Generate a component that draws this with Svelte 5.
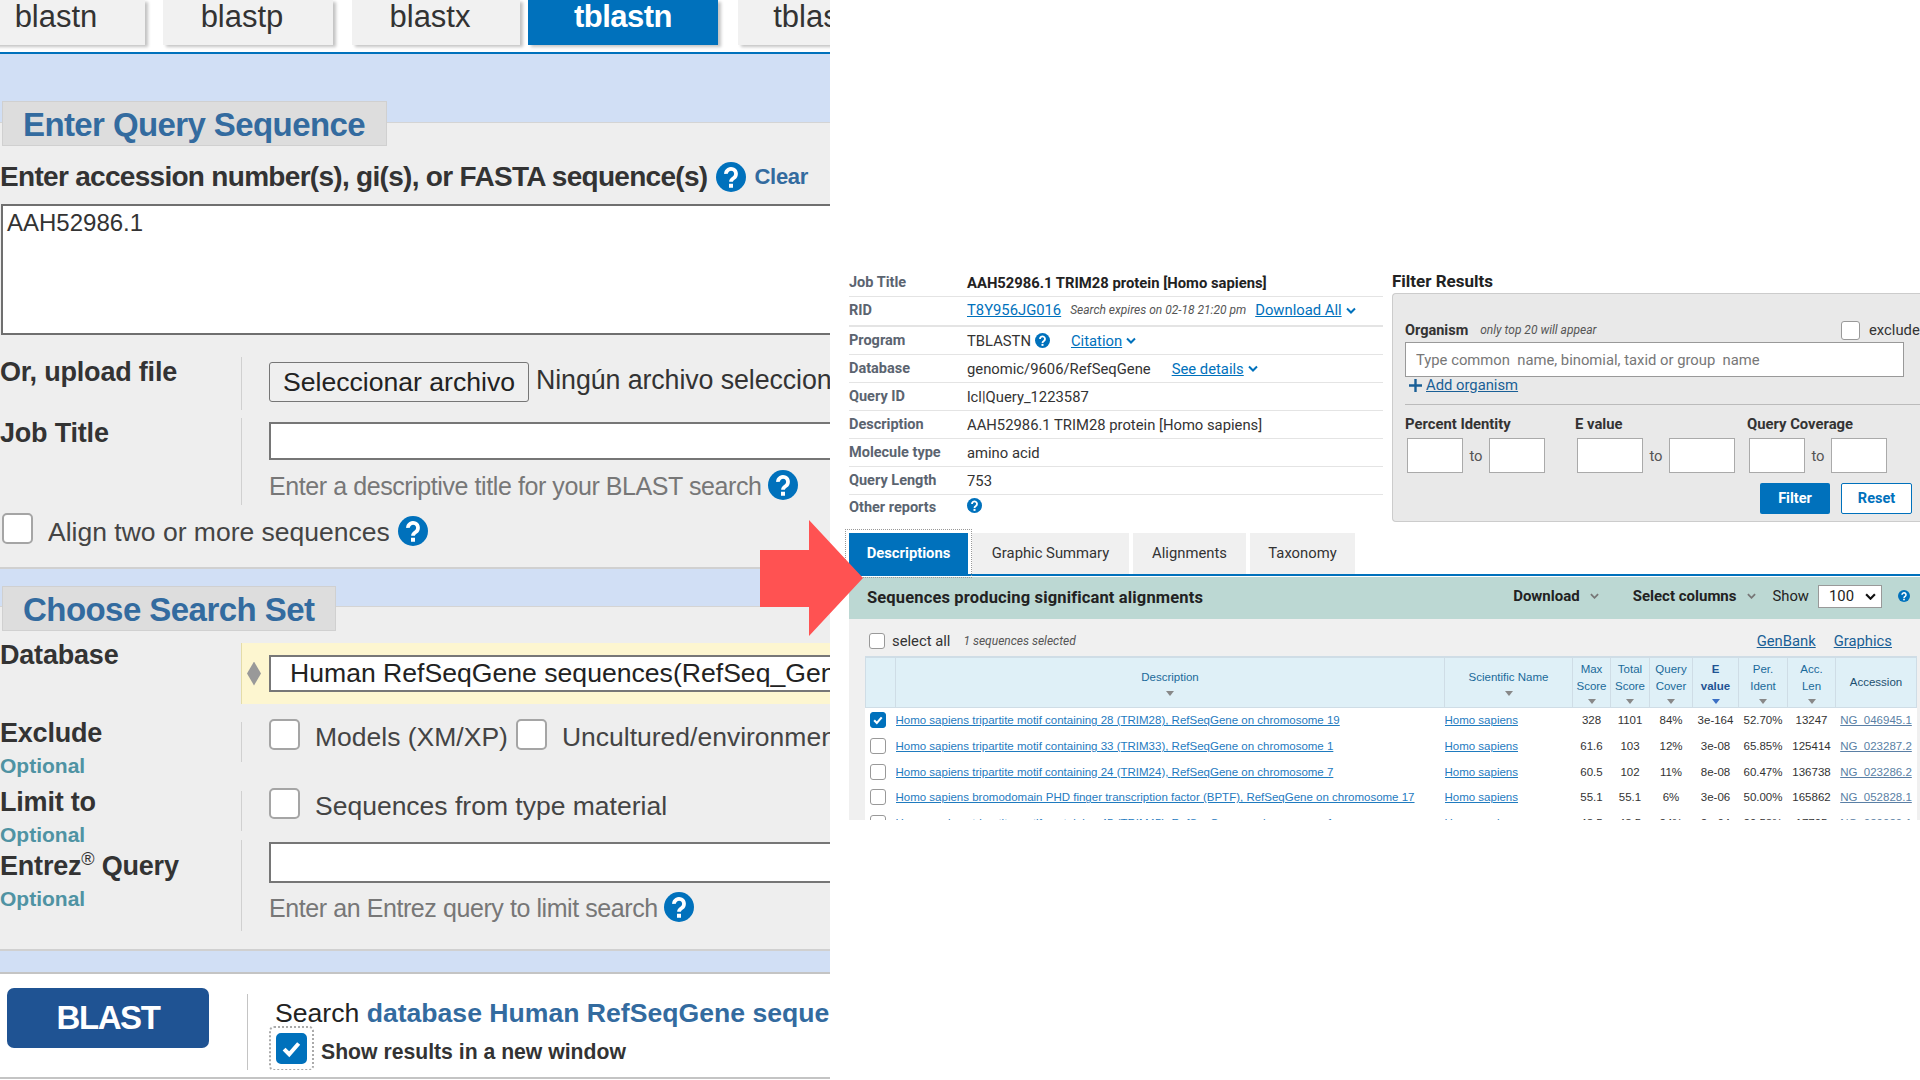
<script>
	const tabs = [
		{ name: 'blastn' },
		{ name: 'blastp' },
		{ name: 'blastx' },
		{ name: 'tblastn', active: true },
		{ name: 'tblastx' }
	];
	const summary = [
		{ label: 'Query ID', value: 'lcl|Query_1223587' },
		{ label: 'Description', value: 'AAH52986.1 TRIM28 protein [Homo sapiens]' },
		{ label: 'Molecule type', value: 'amino acid' },
		{ label: 'Query Length', value: '753' }
	];
	const ranges = [
		{ label: 'Percent Identity', cls: 'narrow' },
		{ label: 'E value', cls: 'wide' },
		{ label: 'Query Coverage', cls: 'narrow' }
	];
	const resultTabs = ['Graphic Summary', 'Alignments', 'Taxonomy'];
	const rows = [
		{ on: true, d: 'Homo sapiens tripartite motif containing 28 (TRIM28), RefSeqGene on chromosome 19', v: ['328', '1101', '84%', '3e-164', '52.70%', '13247'], a: 'NG_046945.1' },
		{ d: 'Homo sapiens tripartite motif containing 33 (TRIM33), RefSeqGene on chromosome 1', v: ['61.6', '103', '12%', '3e-08', '65.85%', '125414'], a: 'NG_023287.2' },
		{ d: 'Homo sapiens tripartite motif containing 24 (TRIM24), RefSeqGene on chromosome 7', v: ['60.5', '102', '11%', '8e-08', '60.47%', '136738'], a: 'NG_023286.2' },
		{ d: 'Homo sapiens bromodomain PHD finger transcription factor (BPTF), RefSeqGene on chromosome 17', v: ['55.1', '55.1', '6%', '3e-06', '50.00%', '165862'], a: 'NG_052828.1' },
		{ d: 'Homo sapiens tripartite motif containing 45 (TRIM45), RefSeqGene on chromosome 1', v: ['48.5', '48.5', '24%', '2e-04', '29.53%', '17795'], a: 'NG_029029.1' }
	];
</script>

{#snippet help(cls)}
	<svg class={cls} viewBox="0 0 24 24">
		<circle cx="12" cy="12" r="12" fill="#0071bc" />
		<path d="M8 9.5a4 4 0 1 1 6.2 3.3c-1.4.9-2.2 1.5-2.2 3" fill="none" stroke="#fff" stroke-width="3" />
		<rect x="10.4" y="17.4" width="3.2" height="3.2" fill="#fff" />
	</svg>
{/snippet}

{#snippet chev(cls)}
	<svg class={cls} viewBox="0 0 10 6"><path d="M1 1l4 4 4-4" fill="none" stroke="currentColor" stroke-width="2" /></svg>
{/snippet}

{#snippet tick()}
	<svg viewBox="0 0 20 20"><path d="M4.5 10.5l3.8 3.8 7-8" fill="none" stroke="#fff" stroke-width="3" /></svg>
{/snippet}

<div class="page">
	<section class="form">
		<nav class="tabs">
			{#each tabs as tab}
				<div class="tab" class:active={tab.active}>{tab.name}</div>
			{/each}
		</nav>

		<div class="band top"></div>
		<div class="panel one">
			<h2 class="legend">Enter Query Sequence</h2>
			<div class="q-head">
				<span>Enter accession number(s), gi(s), or FASTA sequence(s)</span>
				{@render help('ic big')}
				<a href="#clear">Clear</a>
			</div>
			<div class="query">AAH52986.1</div>

			<div class="row upload">
				<div class="lab">Or, upload file</div>
				<div class="field">
					<button class="file">Seleccionar archivo</button>
					<span class="nofile">Ningún archivo seleccionado</span>
				</div>
			</div>
			<div class="row job">
				<div class="lab">Job Title</div>
				<div class="field">
					<div class="box title"></div>
					<div class="hint"><span>Enter a descriptive title for your BLAST search</span> {@render help('ic lift')}</div>
				</div>
			</div>
			<div class="align">
				<span class="cb"></span>
				<span class="al">Align two or more sequences</span>
				{@render help('ic')}
			</div>
		</div>

		<div class="band mid"></div>
		<div class="panel two">
			<h2 class="legend">Choose Search Set</h2>
			<div class="row db">
				<div class="lab">Database</div>
				<div class="field yellow">
					<span class="diamond"></span>
					<div class="select">Human RefSeqGene sequences(RefSeq_Gene)</div>
				</div>
			</div>
			<div class="row exclude">
				<div>
					<div class="lab">Exclude</div>
					<div class="opt">Optional</div>
				</div>
				<div class="field checks">
					<span class="cb"></span><span class="cl">Models (XM/XP)</span>
					<span class="cb second"></span><span class="cl">Uncultured/environmental sample sequences</span>
				</div>
			</div>
			<div class="row limit">
				<div>
					<div class="lab">Limit to</div>
					<div class="opt">Optional</div>
				</div>
				<div class="field checks">
					<span class="cb"></span><span class="cl">Sequences from type material</span>
				</div>
			</div>
			<div class="row entrez">
				<div>
					<div class="lab">Entrez<sup>®</sup> Query</div>
					<div class="opt">Optional</div>
				</div>
				<div class="field">
					<div class="box eq"></div>
					<div class="hint"><span>Enter an Entrez query to limit search</span> {@render help('ic lift')}</div>
				</div>
			</div>
		</div>

		<div class="band low"></div>
		<div class="submit">
			<button class="blast">BLAST</button>
			<div class="sub-right">
				<div class="search">Search <b>database Human RefSeqGene sequences</b></div>
				<div class="newwin">
					<span class="dots"><span class="cb on">{@render tick()}</span></span>
					<b>Show results in a new window</b>
				</div>
			</div>
		</div>
	</section>

	<section class="results">
		<div class="top-split">
			<div class="summary">
				<div class="s-row"><span class="k">Job Title</span><b class="job-v">AAH52986.1 TRIM28 protein [Homo sapiens]</b></div>
				<div class="s-row tall">
					<span class="k">RID</span>
					<a href="#rid">T8Y956JG016</a>
					<i class="exp">Search expires on 02-18 21:20 pm</i>
					<a href="#all">Download All</a>{@render chev('ch')}
				</div>
				<div class="s-row">
					<span class="k">Program</span>
					<span>TBLASTN</span>{@render help('ic tiny')}
					<a class="cite" href="#cite">Citation</a>{@render chev('ch')}
				</div>
				<div class="s-row">
					<span class="k">Database</span>
					<span>genomic/9606/RefSeqGene</span>
					<a class="details" href="#details">See details</a>{@render chev('ch')}
				</div>
				{#each summary as item}
					<div class="s-row"><span class="k">{item.label}</span><span>{item.value}</span></div>
				{/each}
				<div class="s-row last"><span class="k">Other reports</span>{@render help('ic tiny up')}</div>
			</div>

			<div class="filter">
				<h3>Filter Results</h3>
				<div class="f-box">
					<div class="org">
						<b>Organism</b>
						<i>only top 20 will appear</i>
						<span class="cb small"></span>
						<span class="excl">exclude</span>
					</div>
					<input class="org-in" placeholder="Type common  name, binomial, taxid or group  name" />
					<div class="add">
						<svg viewBox="0 0 13 13"><path d="M6.5 0v13M0 6.5h13" stroke="#1a5f96" stroke-width="2.4" /></svg>
						<a href="#add">Add organism</a>
					</div>
					<div class="f-rule"></div>
					<div class="ranges">
						{#each ranges as r}
							<div class="range {r.cls}">
								<b>{r.label}</b>
								<div class="pair"><span class="num"></span><span class="to">to</span><span class="num"></span></div>
							</div>
						{/each}
					</div>
					<div class="f-btns">
						<button class="go">Filter</button>
						<button class="reset">Reset</button>
					</div>
				</div>
			</div>
		</div>

		<div class="r-tabs">
			<div class="r-tab on">Descriptions</div>
			{#each resultTabs as t}
				<div class="r-tab">{t}</div>
			{/each}
		</div>
		<div class="r-head">
			<b class="r-title">Sequences producing significant alignments</b>
			<b class="dl">Download</b>{@render chev('thin')}
			<b class="sc">Select columns</b>{@render chev('thin')}
			<span class="show">Show</span>
			<div class="hundred">100{@render chev('blk')}</div>
			{@render help('ic tiny last-h')}
		</div>
		<div class="r-body">
			<div class="tools">
				<span class="cb small"></span>
				<span class="sa">select all</span>
				<i class="nsel">1 sequences selected</i>
				<a class="gb" href="#gb">GenBank</a>
				<a class="gr" href="#gr">Graphics</a>
			</div>
			<table>
				<colgroup>
					<col style="width:30px" /><col style="width:549px" /><col style="width:128px" />
					<col style="width:38px" /><col style="width:39px" /><col style="width:43px" />
					<col style="width:46px" /><col style="width:49px" /><col style="width:48px" /><col style="width:81px" />
				</colgroup>
				<thead>
					<tr>
						<th></th>
						<th class="dsc">Description<span class="sort"></span></th>
						<th class="dsc">Scientific Name<span class="sort"></span></th>
						<th>Max<br />Score<span class="sort"></span></th>
						<th>Total<br />Score<span class="sort"></span></th>
						<th>Query<br />Cover<span class="sort"></span></th>
						<th class="ev">E<br />value<span class="sort"></span></th>
						<th>Per.<br />Ident<span class="sort"></span></th>
						<th>Acc.<br />Len<span class="sort"></span></th>
						<th class="acc">Accession</th>
					</tr>
				</thead>
				<tbody>
					{#each rows as row}
						<tr>
							<td class="c0"><span class="cb small" class:on={row.on}>{#if row.on}{@render tick()}{/if}</span></td>
							<td class="l"><a href="#d">{row.d}</a></td>
							<td class="l"><a href="#s">Homo sapiens</a></td>
							{#each row.v as cell}
								<td>{cell}</td>
							{/each}
							<td class="r"><a class="muted" href="#a">{row.a}</a></td>
						</tr>
					{/each}
				</tbody>
			</table>
		</div>
	</section>

	<svg class="arrow" viewBox="0 0 103 116"><path d="M0 30h49V0l54 58-54 58V87H0z" fill="#ff5252" /></svg>
</div>

<style>
	:global(body) {
		margin: 0;
		background: #fff;
	}
	a {
		color: inherit;
	}
	b {
		font-weight: 700;
	}
	h2,
	h3 {
		margin: 0;
	}
	.page {
		position: relative;
		display: flex;
		width: 1920px;
		height: 1080px;
		overflow: hidden;
		background: #fff;
	}

	/* left: blast form */
	.form {
		flex: none;
		width: 830px;
		height: 1080px;
		overflow: hidden;
		font-family: 'Liberation Sans', Arial, sans-serif;
		color: #333;
	}
	.tabs {
		display: flex;
		height: 52px;
		border-bottom: 2px solid #0071bc;
		box-sizing: content-box;
	}
	.tab {
		flex: none;
		height: 45px;
		box-sizing: border-box;
		padding: 0 12px 11px 0;
		display: flex;
		align-items: center;
		justify-content: center;
		font-size: 31px;
		background: #f1f1f1;
		box-shadow: 3px 2px 3px #c4c4c4;
		color: #333;
	}
	.tab:nth-child(1) {
		width: 178px;
		margin-left: -33px;
		padding-right: 0;
	}
	.tab:nth-child(2) {
		width: 170px;
		margin-left: 18px;
	}
	.tab:nth-child(3) {
		width: 168px;
		margin-left: 19px;
	}
	.tab:nth-child(4) {
		width: 190px;
		margin-left: 8px;
		padding-right: 0;
		letter-spacing: -0.5px;
	}
	.tab:nth-child(5) {
		width: 168px;
		margin-left: 20px;
		padding-right: 8px;
	}
	.tab.active {
		background: #0071bc;
		color: #fff;
		font-weight: 700;
	}
	.band {
		background: #d1dff5;
	}
	.band.top {
		height: 68px;
	}
	.band.mid {
		height: 37px;
	}
	.band.low {
		height: 21px;
		border-bottom: 2px solid #c4c4c4;
	}
	.panel {
		background: #eee;
		border-top: 1px solid #d4d4d4;
		border-bottom: 2px solid #d0d0d0;
		box-sizing: border-box;
	}
	.panel.one {
		height: 447px;
	}
	.panel.two {
		height: 345px;
	}
	.legend {
		display: inline-block;
		vertical-align: top;
		margin: -22px 0 0 2px;
		padding: 1px 21px 0 20px;
		height: 45px;
		box-sizing: border-box;
		line-height: 43px;
		background: #ddd;
		border: 1px solid #d0d0d0;
		font-size: 33px;
		letter-spacing: -0.6px;
		color: #336b9f;
		white-space: nowrap;
	}
	.q-head {
		display: flex;
		align-items: center;
		height: 36px;
		margin-top: 13px;
		font-size: 28px;
		letter-spacing: -0.7px;
		font-weight: 700;
		white-space: nowrap;
	}
	.q-head a {
		margin-left: 8px;
		font-size: 22px;
		letter-spacing: -0.3px;
		color: #336b9f;
		text-decoration: none;
	}
	.ic {
		width: 30px;
		height: 30px;
		flex: none;
		vertical-align: middle;
	}
	.ic.lift {
		margin-top: -7px;
	}
	.ic.big {
		margin-left: 9px;
	}
	.query {
		height: 131px;
		margin: 9px 0 0 1px;
		padding: 3px 4px;
		box-sizing: border-box;
		background: #fff;
		border: 2px solid #6f6f6f;
		border-right: 0;
		font-size: 24px;
		line-height: 28px;
	}
	.row {
		display: grid;
		grid-template-columns: 241px 1fr;
	}
	.lab {
		font-size: 27px;
		font-weight: 700;
		line-height: 30px;
		letter-spacing: -0.2px;
		white-space: nowrap;
	}
	.lab sup {
		font-size: 18px;
		font-weight: 400;
		line-height: 0;
	}
	.field {
		border-left: 1px solid #d0d0d0;
		padding-left: 27px;
		white-space: nowrap;
		overflow: hidden;
		min-width: 0;
	}
	.upload {
		margin-top: 22px;
		height: 53px;
	}
	.upload .field {
		padding-top: 5px;
		display: flex;
		align-items: flex-start;
		gap: 7px;
	}
	.file {
		flex: none;
		width: 260px;
		height: 40px;
		padding: 0;
		background: #efefef;
		border: 1px solid #767676;
		border-radius: 3px;
		font: 26.6px 'Liberation Sans', Arial, sans-serif;
		color: #222;
	}
	.nofile {
		font-size: 26.8px;
		letter-spacing: -0.1px;
		line-height: 36px;
		color: #333;
	}
	.job {
		margin-top: 8px;
		height: 87px;
	}
	.job .field {
		padding-top: 4px;
	}
	.box {
		background: #fff;
		border: 2px solid #767676;
		border-right: 0;
		box-sizing: border-box;
	}
	.box.title {
		height: 38px;
	}
	.box.eq {
		height: 41px;
	}
	.hint {
		margin-top: 11px;
		font-size: 25px;
		letter-spacing: -0.42px;
		line-height: 30px;
		color: #777;
	}
	.cb {
		display: inline-flex;
		flex: none;
		width: 31px;
		height: 31px;
		box-sizing: border-box;
		background: #fff;
		border: 2px solid #a5a5a5;
		border-radius: 5px;
	}
	.cb.on {
		background: #0071bc;
		border-color: #0071bc;
	}
	.cb.small {
		width: 16px;
		height: 16px;
		border-width: 1px;
		border-color: #999;
		border-radius: 3px;
	}
	.cb.small.on {
		border-color: #0071bc;
	}
	.align {
		display: flex;
		align-items: center;
		margin: 9px 0 0 2px;
		height: 33px;
		font-size: 26.5px;
		color: #444;
		white-space: nowrap;
	}
	.align .cb {
		margin: 0 15px 5px 0;
	}
	.al {
		padding-top: 4px;
	}
	.align .ic {
		margin-left: 8px;
	}
	.panel.two .legend {
		margin-top: -21px;
		padding-right: 21px;
		letter-spacing: -0.55px;
	}
	.panel.two .lab {
		margin-top: -3px;
	}
	.db {
		margin-top: 12px;
		height: 61px;
	}
	.field.yellow {
		display: flex;
		align-items: center;
		padding-left: 5px;
		background: #fdf6d0;
		border-left-color: #e4dca8;
	}
	.diamond {
		flex: none;
		width: 14px;
		height: 24px;
		margin-right: 8px;
		background: #999;
		clip-path: polygon(50% 0, 100% 50%, 50% 100%, 0 50%);
	}
	.select {
		flex: 1;
		height: 37px;
		box-sizing: border-box;
		padding-left: 19px;
		background: #fff;
		border: 2px solid #777;
		border-right: 0;
		font-size: 26.6px;
		line-height: 33px;
		color: #222;
		white-space: nowrap;
		overflow: hidden;
	}
	.exclude {
		margin-top: 18px;
		height: 69px;
	}
	.limit {
		height: 49px;
	}
	.exclude .lab,
	.limit .lab {
		line-height: 28px;
	}
	.opt {
		margin-top: 6px;
		font-size: 21px;
		font-weight: 700;
		line-height: 26px;
		color: #4f93a3;
	}
	.checks {
		display: flex;
		align-items: flex-start;
		height: 40px;
		overflow: visible;
		margin-right: 0;
	}
	.checks .cl {
		margin: 0 0 0 15px;
		font-size: 26.5px;
		line-height: 30px;
		color: #444;
	}
	.checks .cb {
		margin-top: -3px;
	}
	.cb.second {
		margin-left: 8px;
	}
	.entrez {
		height: 91px;
	}
	.panel.two .entrez .lab {
		margin-top: 12px;
		line-height: 28px;
	}
	.entrez .field {
		padding-top: 2px;
	}
	.entrez .hint {
		margin-top: 10px;
	}
	.submit {
		display: grid;
		grid-template-columns: 247px 1fr;
		height: 103px;
		border-bottom: 2px solid #c4c4c4;
	}
	.blast {
		width: 202px;
		height: 60px;
		margin: 14px 0 0 7px;
		padding: 0;
		background: #1f5393;
		border: 0;
		border-radius: 7px;
		color: #fff;
		font: 700 33px 'Liberation Sans', Arial, sans-serif;
		letter-spacing: -1.4px;
	}
	.sub-right {
		margin-top: 20px;
		height: 76px;
		border-left: 1px solid #c4c4c4;
		padding-left: 27px;
		white-space: nowrap;
		overflow: hidden;
	}
	.search {
		margin-top: 4px;
		font-size: 26.6px;
		line-height: 30px;
		color: #222;
	}
	.search b {
		color: #336b9f;
	}
	.newwin {
		display: flex;
		align-items: center;
		margin-top: 4px;
		font-size: 21.2px;
		color: #333;
	}
	.newwin b {
		padding-top: 8px;
	}
	.dots {
		display: flex;
		margin: -7px 7px -7px -6px;
		padding: 5px;
		border: 2px dotted #aaa;
		border-radius: 5px;
	}

	/* right: results */
	.results {
		flex: 1;
		min-width: 0;
		padding: 269px 0 0 19px;
		font-family: Roboto, 'Liberation Sans', sans-serif;
		font-size: 14.8px;
		color: #333;
	}
	.top-split {
		display: flex;
		gap: 9px;
		height: 254px;
	}
	.summary {
		flex: none;
		width: 534px;
	}
	.s-row {
		display: flex;
		align-items: center;
		height: 28px;
		box-sizing: border-box;
		border-bottom: 1px solid #e4e4e4;
		white-space: nowrap;
	}
	.s-row.tall {
		height: 30px;
		padding: 0 0 2px;
		border-bottom-width: 2px;
	}
	.s-row.last {
		border-bottom: 0;
		padding-bottom: 3px;
	}
	.k {
		flex: none;
		width: 118px;
		font-size: 14.5px;
		font-weight: 700;
		color: #5b6470;
	}
	.s-row a {
		color: #0071bc;
	}
	.job-v {
		color: #222;
	}
	.exp {
		margin: 0 9px 0 9px;
		font-size: 12px;
		color: #555;
	}
	.ch {
		width: 10px;
		height: 7px;
		margin-left: 4px;
		color: #0071bc;
	}
	.ic.tiny {
		width: 15px;
		height: 15px;
		margin-left: 4px;
	}
	.ic.up {
		margin: -5px 0 0 0;
	}
	.cite {
		margin-left: 21px;
	}
	.details {
		margin-left: 21px;
	}
	.filter {
		flex: 1;
		min-width: 0;
	}
	.filter h3 {
		height: 24px;
		font-size: 17px;
		line-height: 24px;
		font-weight: 700;
		color: #222;
	}
	.f-box {
		height: 229px;
		box-sizing: border-box;
		padding: 26px 0 0 12px;
		background: #e9e9e9;
		border: 1px solid #ccc;
		border-right: 0;
		border-radius: 4px 0 0 4px;
	}
	.org {
		display: flex;
		align-items: center;
		height: 20px;
		margin-top: 0;
	}
	.org b {
		font-size: 14.5px;
		color: #333;
	}
	.org i {
		margin-left: 12px;
		font-size: 12px;
		color: #555;
	}
	.org .cb {
		margin-left: auto;
		width: 19px;
		height: 19px;
	}
	.excl {
		margin: 0 0 0 9px;
		width: 51px;
		white-space: nowrap;
		overflow: hidden;
	}
	.org-in {
		display: block;
		width: 499px;
		height: 35px;
		box-sizing: border-box;
		margin-top: 2px;
		padding: 0 10px;
		background: #fff;
		border: 1px solid #999;
		border-radius: 0;
		font: 14.8px Roboto, sans-serif;
	}
	.org-in::placeholder {
		color: #777;
		opacity: 1;
	}
	.add {
		display: flex;
		align-items: center;
		height: 18px;
		padding-left: 4px;
		margin-top: -1px;
	}
	.add svg {
		width: 13px;
		height: 13px;
		margin-right: 4px;
	}
	.add a {
		color: #1a5f96;
	}
	.f-rule {
		margin-top: 10px;
		border-top: 1px solid #bbb;
	}
	.ranges {
		display: flex;
		margin-top: 10px;
	}
	.range {
		flex: none;
	}
	.range:nth-child(1) {
		width: 170px;
	}
	.range:nth-child(2) {
		width: 172px;
	}
	.range b {
		display: block;
		height: 21px;
		line-height: 19px;
		white-space: nowrap;
	}
	.pair {
		display: flex;
		align-items: center;
		margin: 2px 0 0 2px;
	}
	.num {
		width: 56px;
		height: 35px;
		box-sizing: border-box;
		background: #fff;
		border: 1px solid #aaa;
	}
	.wide .num {
		width: 66px;
	}
	.to {
		width: 26px;
		text-align: center;
		color: #555;
	}
	.f-btns {
		display: flex;
		gap: 11px;
		margin: 10px 0 0 355px;
	}
	.f-btns button {
		height: 31px;
		padding: 0;
		border-radius: 2px;
		font: 700 14.5px Roboto, sans-serif;
	}
	.go {
		width: 70px;
		background: #0071bc;
		border: 0;
		color: #fff;
	}
	.reset {
		width: 71px;
		background: #fff;
		border: 1px solid #0071bc;
		color: #0071bc;
	}
	.r-tabs {
		display: flex;
		gap: 4px;
		height: 41px;
		margin-top: 10px;
		border-bottom: 2px solid #0071bc;
		box-sizing: content-box;
	}
	.r-tab {
		display: flex;
		align-items: center;
		justify-content: center;
		width: 113px;
		padding-bottom: 1px;
		box-sizing: border-box;
		background: #f0f0f0;
	}
	.r-tab:nth-child(1) {
		position: relative;
		width: 119px;
		background: #0071bc;
		color: #fff;
		font-weight: 700;
		outline: 1px dotted #999;
		outline-offset: 3px;
	}
	.r-tab:nth-child(2) {
		width: 157px;
	}
	.r-tab:nth-child(4) {
		width: 105px;
	}
	.r-head {
		display: flex;
		align-items: center;
		height: 42px;
		box-sizing: border-box;
		padding: 0 0 4px 18px;
		background: #bcd8d3;
		margin-top: 1px;
		color: #222;
		white-space: nowrap;
	}
	.r-title {
		margin-top: 2px;
		font-size: 16.5px;
		letter-spacing: 0.15px;
	}
	.dl {
		margin-left: auto;
		font-size: 15px;
	}
	.thin {
		width: 9px;
		height: 6px;
		margin-left: 10px;
		color: #777;
	}
	.sc {
		margin-left: 34px;
		font-size: 15px;
	}
	.show {
		margin-left: 17px;
	}
	.hundred {
		display: flex;
		align-items: center;
		justify-content: space-between;
		box-sizing: border-box;
		width: 64px;
		height: 23px;
		margin: 0 0 0 9px;
		padding: 0 5px 0 10px;
		background: #fff;
		border: 1px solid #999;
	}
	.blk {
		width: 11px;
		height: 7px;
		color: #111;
	}
	.ic.last-h {
		width: 12px;
		height: 12px;
		margin: 0 0 0 16px;
		padding-right: 10px;
		box-sizing: content-box;
	}
	.r-body {
		height: 201px;
		overflow: hidden;
		background: #f0f0f0;
	}
	.tools {
		display: flex;
		align-items: center;
		height: 37px;
		padding: 7px 28px 0 20px;
		box-sizing: border-box;
		white-space: nowrap;
	}
	.sa {
		margin-left: 7px;
	}
	.nsel {
		margin-left: 13px;
		font-size: 12px;
		color: #555;
	}
	.gb {
		margin-left: auto;
		color: #1a5f96;
	}
	.gr {
		margin-left: 18px;
		color: #1a5f96;
	}
	table {
		width: 1051px;
		margin-left: 16px;
		table-layout: fixed;
		border-collapse: collapse;
		background: #fff;
		font-family: 'Liberation Sans', Arial, sans-serif;
		font-size: 11.5px;
	}
	thead tr {
		height: 50px;
		background: #dff0f7;
	}
	th {
		position: relative;
		padding: 0 0 9px;
		border: 1px solid #cfdde6;
		border-top-width: 2px;
		font-weight: 400;
		line-height: 17px;
		color: #1a6a9a;
		text-align: center;
		vertical-align: middle;
	}
	th.dsc {
		padding-bottom: 10px;
	}
	th.ev {
		font-weight: 700;
		color: #1f5393;
	}
	th.acc {
		padding: 0;
		color: #1c4f70;
	}
	.sort {
		position: absolute;
		left: 50%;
		bottom: 3px;
		margin-left: -4px;
		border: 4px solid transparent;
		border-top: 5px solid #888;
		border-bottom: 0;
	}
	th.dsc .sort {
		bottom: 11px;
	}
	th.ev .sort {
		border-top-color: #3a6fc4;
	}
	td {
		height: 25.7px;
		padding: 0;
		text-align: center;
		color: #333;
		white-space: nowrap;
		overflow: hidden;
	}
	td.c0 {
		padding-left: 4px;
		text-align: left;
	}
	td.c0 .cb {
		vertical-align: middle;
	}
	td.l {
		text-align: left;
	}
	td.l a {
		color: #1f7bbf;
	}
	.muted {
		color: #5a7fa5;
	}
	.arrow {
		position: absolute;
		left: 760px;
		top: 520px;
		width: 103px;
		height: 116px;
	}
</style>
